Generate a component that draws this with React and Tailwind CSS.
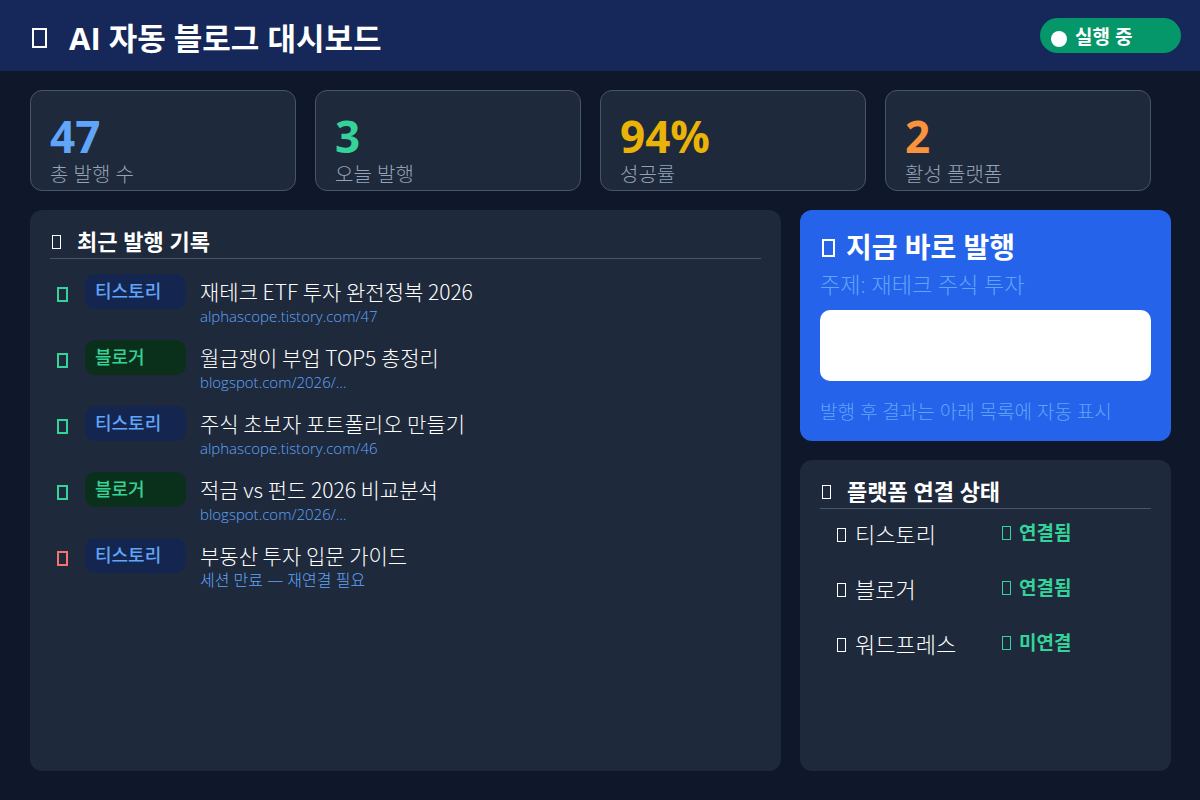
const stats = [
  { value: "47", label: "총 발행 수", color: "text-[#60a5fa]" },
  { value: "3", label: "오늘 발행", color: "text-[#34d399]" },
  { value: "94%", label: "성공률", color: "text-[#eab308]" },
  { value: "2", label: "활성 플랫폼", color: "text-[#fb923c]" },
];

const posts = [
  { ok: true, platform: "티스토리", title: "재테크 ETF 투자 완전정복 2026", url: "alphascope.tistory.com/47" },
  { ok: true, platform: "블로거", title: "월급쟁이 부업 TOP5 총정리", url: "blogspot.com/2026/…" },
  { ok: true, platform: "티스토리", title: "주식 초보자 포트폴리오 만들기", url: "alphascope.tistory.com/46" },
  { ok: true, platform: "블로거", title: "적금 vs 펀드 2026 비교분석", url: "blogspot.com/2026/…" },
  { ok: false, platform: "티스토리", title: "부동산 투자 입문 가이드", note: "세션 만료 — 재연결 필요" },
];

const platforms = [
  { name: "티스토리", status: "연결됨" },
  { name: "블로거", status: "연결됨" },
  { name: "워드프레스", status: "미연결" },
];

const badgeColors = {
  티스토리: "bg-[#142650] text-[#60a5fa]",
  블로거: "bg-[#0a301c] text-[#34d399]",
};

function StatCard({ value, label, color }) {
  return (
    <div className="h-[101px] rounded-xl border border-[#475569] bg-[#1e293b] px-[19px] pt-[22px]">
      <p className={`text-[44px] leading-[46px] font-bold ${color}`}>{value}</p>
      <p className="pt-[2px] text-[20px] leading-[28px] font-light text-[#94a3b8]">{label}</p>
    </div>
  );
}

function PanelTitle({ children }) {
  return (
    <h2 className="flex items-center gap-4 border-b border-[#475569] pl-[2px] pb-[2px] text-[22px] leading-[30px] font-bold">
      <span className="mt-[2px] h-[14px] w-[9px] shrink-0 border border-white" />
      {children}
    </h2>
  );
}

function PostRow({ ok, platform, title, url, note }) {
  return (
    <li className="flex h-[66px] items-start">
      <span className="flex h-[39px] w-[35px] shrink-0 items-center pt-[2px] pl-[7px]">
        <span className={`h-[15px] w-[11px] border-2 ${ok ? "border-[#34d399]" : "border-[#f87171]"}`} />
      </span>
      <span
        className={`flex h-[35px] w-[101px] shrink-0 items-center rounded-[10px] pl-[10px] text-[18px] font-medium ${badgeColors[platform]}`}
      >
        {platform}
      </span>
      <div className="min-w-0 pt-[3px] pl-[14px]">
        <p className="font-['Noto_Sans_CJK_KR',sans-serif] text-[21px] leading-[28px] font-light">{title}</p>
        {url ? (
          <a href={`https://${url}`} className="block text-[15px] leading-[22px] text-[#60a5fa] font-light">
            {url}
          </a>
        ) : (
          <p className="text-[16px] leading-[22px] font-light text-[#60a5fa]">{note}</p>
        )}
      </div>
    </li>
  );
}

export default function App() {
  return (
    <div className="flex min-h-screen flex-col bg-[#0f172a] font-['Open_Sans','Noto_Sans_CJK_KR',sans-serif] text-white">
      <header className="flex h-[71px] items-center justify-between bg-[#162759] pr-[19px] pl-8">
        <h1 className="flex items-center gap-[22px] pt-1 text-[31px] leading-[40px] font-bold">
          <span className="h-5 w-[15px] shrink-0 border-2 border-white" />
          AI 자동 블로그 대시보드
        </h1>
        <div className="flex h-[35px] w-[141px] items-center gap-2 rounded-full bg-[#059669] pt-1 pl-[11px] text-[19px] font-bold">
          <span className="mt-[2px] h-4 w-4 rounded-full bg-white" />
          실행 중
        </div>
      </header>

      <section className="grid grid-cols-4 gap-[19px] pt-[19px] pr-[49px] pl-[30px]">
        {stats.map((s) => (
          <StatCard key={s.label} {...s} />
        ))}
      </section>

      <main className="flex flex-1 gap-[19px] pt-[19px] pr-[29px] pb-[29px] pl-[30px]">
        <section className="min-w-0 flex-1 rounded-xl bg-[#1e293b] px-5 pt-4">
          <PanelTitle>최근 발행 기록</PanelTitle>
          <ul className="pt-[15px]">
            {posts.map((p) => (
              <PostRow key={p.title} {...p} />
            ))}
          </ul>
        </section>

        <aside className="flex w-[371px] shrink-0 flex-col gap-[19px]">
          <section className="rounded-xl bg-[#2563eb] px-5 pt-[18px] pb-4">
            <h2 className="flex items-center gap-[11px] pl-[2px] text-[28px] leading-[38px] font-bold">
              <span className="mt-[2px] h-[18px] w-[13px] shrink-0 border-2 border-white" />
              지금 바로 발행
            </h2>
            <p className="text-[22px] leading-[36px] font-light text-[#60a5fa]">주제: 재테크 주식 투자</p>
            <button type="button" aria-label="지금 발행" className="mt-2 block h-[71px] w-full rounded-[10px] bg-white" />
            <p className="mt-[18px] text-[19px] leading-[26px] font-light text-[#60a5fa]">
              발행 후 결과는 아래 목록에 자동 표시
            </p>
          </section>

          <section className="flex-1 rounded-xl bg-[#1e293b] px-5 pt-4">
            <PanelTitle>플랫폼 연결 상태</PanelTitle>
            <ul>
              {platforms.map((p) => (
                <li key={p.name} className="flex h-[55px] items-start pt-[10px] pl-[17px] leading-[30px]">
                  <span className="flex w-[165px] items-center gap-[9px] text-[22px] font-light">
                    <span className="mt-[2px] h-[14px] w-[9px] border border-white" />
                    {p.name}
                  </span>
                  <span className="flex items-center gap-2 text-[19px] leading-[28px] font-bold text-[#34d399]">
                    <span className="h-[14px] w-[9px] border border-[#34d399]" />
                    {p.status}
                  </span>
                </li>
              ))}
            </ul>
          </section>
        </aside>
      </main>
    </div>
  );
}
